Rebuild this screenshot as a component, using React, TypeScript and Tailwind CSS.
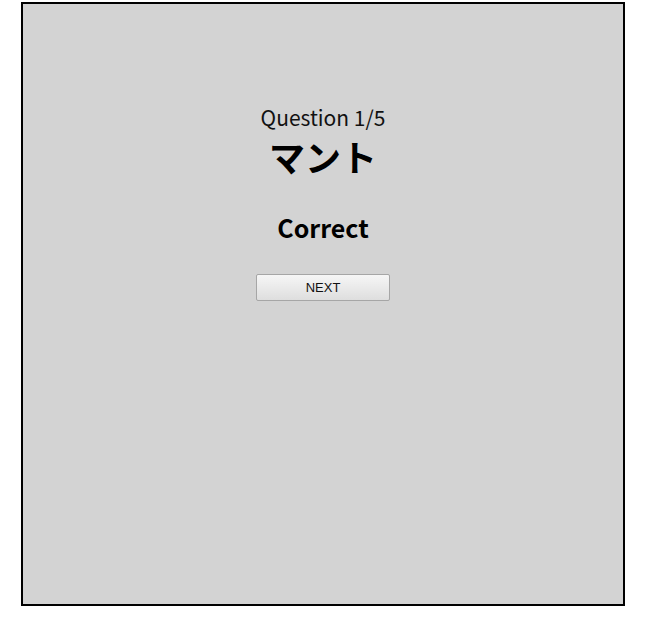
export default function App() {
  return (
    <div className="w-[646px] h-[628px] bg-white pt-[2px] pl-[21px]">
      <div
        className="w-[604px] h-[604px] border-2 border-black bg-[#d3d3d3] flex flex-col items-center pt-[99px]"
        style={{ fontFamily: '"Noto Sans CJK JP", "Noto Sans", sans-serif' }}
      >
        <div className="text-[21px] leading-[28px] text-[#111]">Question 1/5</div>
        <div className="mt-[1px] text-[36px] leading-[48px] font-bold text-black">マント</div>
        <div className="mt-[30px] text-[25px] leading-[34px] font-bold text-black">Correct</div>
        <button
          type="button"
          className="mt-[30px] w-[134px] h-[27px] border border-[#a6a6a6] rounded-[2px] bg-gradient-to-b from-[#f6f6f6] to-[#dedede] text-[13px] text-[#111]"
          style={{ fontFamily: '"Liberation Sans", Arial, sans-serif' }}
        >
          NEXT
        </button>
      </div>
    </div>
  );
}
